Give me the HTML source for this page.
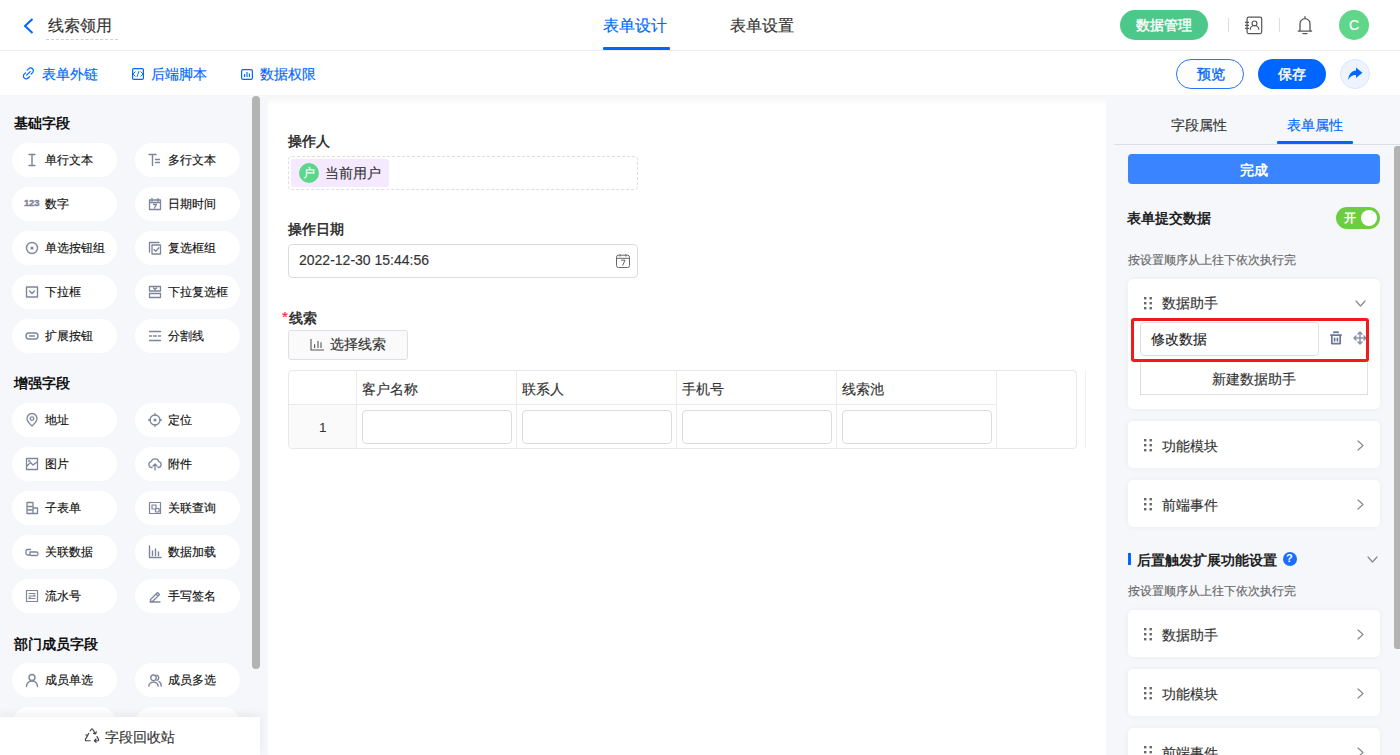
<!DOCTYPE html>
<html><head><meta charset="utf-8">
<style>
*{box-sizing:border-box;margin:0;padding:0}
html,body{width:1400px;height:755px;overflow:hidden;background:#fff;font-family:"Liberation Sans",sans-serif;color:#333}
.a{position:absolute}
.t{position:absolute;white-space:nowrap;line-height:1;-webkit-text-stroke-width:0.15px}
svg{position:absolute;overflow:visible}
/* header */
#hdr{left:0;top:0;width:1400px;height:51px;border-bottom:1px solid #ececec;background:#fff}
#bar2{left:0;top:51px;width:1400px;height:44px;background:#fff}
#shadow{left:0;top:95px;width:1400px;height:10px;background:linear-gradient(#f4f4f4,#fff)}
#left{left:0;top:95px;width:268px;height:660px;background:#f5f7fb}
#right{left:1106px;top:95px;width:294px;height:660px;background:#f5f7fb}
.pill{position:absolute;width:105px;height:34px;border-radius:17px;background:#fff}
.pill .t{font-size:12px;left:33px;top:11px;color:#222}
.pill svg{left:14px;top:11px}
.stitle{font-size:14px;font-weight:bold;color:#111}
.card{position:absolute;left:1128px;width:252px;background:#fff;border-radius:5px;box-shadow:0 0 6px rgba(0,0,0,0.05)}
.card .t{font-size:14px;color:#333}
.lbl{font-size:14px;font-weight:bold;color:#333}
.t[style*="bold"],.lbl,.stitle{-webkit-text-stroke-width:0}
.inp{position:absolute;border:1px solid #dcdcdc;border-radius:4px;background:#fff}
</style></head><body>
<div id="hdr" class="a"></div>
<!-- back arrow -->
<svg style="left:23px;top:18px" width="11" height="16" viewBox="0 0 11 16"><path d="M9.5 1L2 8L9.5 15" fill="none" stroke="#0066ff" stroke-width="2"/></svg>
<div class="t" style="left:48px;top:18px;font-size:16px;color:#333">线索领用</div>
<div class="a" style="left:46px;top:39px;width:72px;border-top:1px dashed #d0d0d0"></div>
<div class="t" style="left:603px;top:18px;font-size:16px;color:#0066ff">表单设计</div>
<div class="a" style="left:603px;top:47px;width:67px;height:3px;background:#0066ff;border-radius:1px"></div>
<div class="t" style="left:730px;top:18px;font-size:16px;color:#333">表单设置</div>
<div class="a" style="left:1120px;top:10px;width:88px;height:30px;border-radius:15px;background:#4cc98a"></div>
<div class="t" style="left:1136px;top:18px;font-size:14px;color:#fff;-webkit-text-stroke:0.35px #fff">数据管理</div>
<div class="a" style="left:1228px;top:18px;width:1px;height:14px;background:#ddd"></div>
<div class="a" style="left:1279px;top:18px;width:1px;height:14px;background:#ddd"></div>
<div class="a" style="left:1339px;top:10px;width:30px;height:30px;border-radius:50%;background:#5fd68a"></div>
<div class="t" style="left:1349px;top:18px;font-size:14px;color:#fff">C</div>
<div id="bar2" class="a"></div>
<div class="t" style="left:42px;top:67px;font-size:14px;color:#0066ff">表单外链</div>
<div class="t" style="left:151px;top:67px;font-size:14px;color:#0066ff">后端脚本</div>
<div class="t" style="left:260px;top:67px;font-size:14px;color:#0066ff">数据权限</div>
<div class="a" style="left:1176px;top:59px;width:68px;height:30px;border-radius:15px;border:1px solid #2a72f8"></div>
<div class="t" style="left:1197px;top:67px;font-size:14px;color:#0066ff;-webkit-text-stroke-width:0.35px">预览</div>
<div class="a" style="left:1258px;top:59px;width:68px;height:30px;border-radius:15px;background:#0066ff"></div>
<div class="t" style="left:1278px;top:67px;font-size:14px;color:#fff;-webkit-text-stroke-width:0.45px">保存</div>
<div class="a" style="left:1340px;top:59px;width:30px;height:30px;border-radius:50%;background:#eef4ff;border:1px solid #d9e6fb"></div>
<svg style="left:22px;top:67px" width="13" height="13" viewBox="0 0 13 13"><path d="M5.2 3.2L6.6 1.8A2.5 2.5 0 0 1 10.6 5.6L9.2 7M7.6 9.6L6.2 11A2.5 2.5 0 0 1 2.2 7.2L3.6 5.8M4.6 8.2L8.2 4.6" fill="none" stroke="#0066ff" stroke-width="1.2" stroke-linecap="round"/></svg>
<svg style="left:132px;top:68px" width="12" height="12" viewBox="0 0 12 12"><rect x="0.6" y="0.6" width="10.8" height="10.8" rx="1.2" fill="none" stroke="#0066ff" stroke-width="1.2"/><path d="M3.4 3.6L1 6L3.4 8.4M5 8.9L7 3.1M8.6 3.6L11 6L8.6 8.4" fill="none" stroke="#0066ff" stroke-width="0.95"/></svg>
<svg style="left:241px;top:69px" width="12" height="11" viewBox="0 0 12 11"><rect x="0.6" y="0.6" width="10.8" height="9.8" rx="1.6" fill="none" stroke="#0066ff" stroke-width="1.2"/><path d="M3.6 5V8M6 3V8M8.4 4.5V8" fill="none" stroke="#0066ff" stroke-width="1.1"/></svg>
<svg style="left:1244px;top:16px" width="20" height="20" viewBox="0 0 20 20"><rect x="3.1" y="1.2" width="14.6" height="16.4" rx="1.5" fill="none" stroke="#555" stroke-width="1.2"/><path d="M1 6.3H5M1 9.3H5M1 12.3H5M6.2 13.8A4.3 4.3 0 0 1 14.8 13.8M10.5 5A2.4 2.4 0 1 1 10.5 9.8A2.4 2.4 0 1 1 10.5 5Z" fill="none" stroke="#555" stroke-width="1.2"/></svg>
<svg style="left:1297px;top:15px" width="16" height="20" viewBox="0 0 16 20"><path d="M8 1.6V2.8M3 15V8.7A5 5 0 0 1 13 8.7V15Q13 15.8 14.6 16.2H1.4Q3 15.8 3 15ZM6 18.6H10" fill="none" stroke="#555" stroke-width="1.3" stroke-linecap="round" stroke-linejoin="round"/></svg>
<svg style="left:1346px;top:66px" width="18" height="16" viewBox="0 0 18 16"><path d="M10 1.6L16.4 6.8L10 12V9C6.2 9 3.8 10.8 2.2 14C2.4 8.6 5.6 4.6 10 4.4Z" fill="#0066ff"/></svg>
<div id="shadow" class="a"></div>

<div class="a" id="left"></div>
<div class="t stitle" style="left:14px;top:116px">基础字段</div>
<div class="pill" style="left:12px;top:143px"></div>
<svg style="left:25px;top:153px" width="14" height="14" viewBox="0 0 14 14" ><path d="M4 1.5H10M7 1.5V12.5M4 12.5H10" fill="none" stroke="#7d859b" stroke-width="1.4" stroke-linecap="round" stroke-linejoin="round"/></svg>
<div class="t" style="left:45px;top:154px;font-size:12px;color:#111;-webkit-text-stroke:0.15px #111">单行文本</div>
<div class="pill" style="left:135px;top:143px"></div>
<svg style="left:148px;top:153px" width="14" height="14" viewBox="0 0 14 14" ><path d="M1 1.5H8M4.5 1.5V12.5M7.5 6.5H11.5M7.5 9.5H11.5" fill="none" stroke="#7d859b" stroke-width="1.4" stroke-linecap="round" stroke-linejoin="round"/></svg>
<div class="t" style="left:168px;top:154px;font-size:12px;color:#111;-webkit-text-stroke:0.15px #111">多行文本</div>
<div class="pill" style="left:12px;top:187px"></div>
<div class="t" style="left:24px;top:198px;font-size:9.5px;font-weight:bold;color:#7d859b;letter-spacing:-0.2px;-webkit-text-stroke-width:0.4px">123</div>
<div class="t" style="left:45px;top:198px;font-size:12px;color:#111;-webkit-text-stroke:0.15px #111">数字</div>
<div class="pill" style="left:135px;top:187px"></div>
<svg style="left:148px;top:197px" width="14" height="14" viewBox="0 0 14 14" ><path d="M1.5 3H12.5V12.5H1.5ZM1.5 5.5H12.5M4 1.5V4M10 1.5V4M5.5 7.5H8.5L6.5 11" fill="none" stroke="#7d859b" stroke-width="1.3" stroke-linecap="round" stroke-linejoin="round"/></svg>
<div class="t" style="left:168px;top:198px;font-size:12px;color:#111;-webkit-text-stroke:0.15px #111">日期时间</div>
<div class="pill" style="left:12px;top:231px"></div>
<svg style="left:25px;top:241px" width="14" height="14" viewBox="0 0 14 14" ><circle cx="7" cy="7" r="5.5" fill="none" stroke="#7d859b" stroke-width="1.4"/><circle cx="7" cy="7" r="1.6" fill="#7d859b"/></svg>
<div class="t" style="left:45px;top:242px;font-size:12px;color:#111;-webkit-text-stroke:0.15px #111">单选按钮组</div>
<div class="pill" style="left:135px;top:231px"></div>
<svg style="left:148px;top:241px" width="14" height="14" viewBox="0 0 14 14" ><path d="M1.5 11V1.5H11M4 4H12.5V13H4ZM6 8.5L7.8 10.2L10.8 6.8" fill="none" stroke="#7d859b" stroke-width="1.3" stroke-linecap="round" stroke-linejoin="round"/></svg>
<div class="t" style="left:168px;top:242px;font-size:12px;color:#111;-webkit-text-stroke:0.15px #111">复选框组</div>
<div class="pill" style="left:12px;top:275px"></div>
<svg style="left:25px;top:285px" width="14" height="14" viewBox="0 0 14 14" ><path d="M1.5 2H12.5V12H1.5ZM4.5 6L7 8.5L9.5 6" fill="none" stroke="#7d859b" stroke-width="1.4" stroke-linecap="round" stroke-linejoin="round"/></svg>
<div class="t" style="left:45px;top:286px;font-size:12px;color:#111;-webkit-text-stroke:0.15px #111">下拉框</div>
<div class="pill" style="left:135px;top:275px"></div>
<svg style="left:148px;top:285px" width="14" height="14" viewBox="0 0 14 14" ><path d="M1.5 1.5H12.5V6H1.5ZM1.5 8.5H12.5V12.5H1.5ZM5.5 3L7 4.5L8.5 3" fill="none" stroke="#7d859b" stroke-width="1.3" stroke-linecap="round" stroke-linejoin="round"/></svg>
<div class="t" style="left:168px;top:286px;font-size:12px;color:#111;-webkit-text-stroke:0.15px #111">下拉复选框</div>
<div class="pill" style="left:12px;top:319px"></div>
<svg style="left:25px;top:329px" width="14" height="14" viewBox="0 0 14 14" ><path d="M4 4H10A3 3 0 0 1 10 10H4A3 3 0 0 1 4 4ZM4.5 7H9.5" fill="none" stroke="#7d859b" stroke-width="1.4" stroke-linecap="round" stroke-linejoin="round"/></svg>
<div class="t" style="left:45px;top:330px;font-size:12px;color:#111;-webkit-text-stroke:0.15px #111">扩展按钮</div>
<div class="pill" style="left:135px;top:319px"></div>
<svg style="left:148px;top:329px" width="14" height="14" viewBox="0 0 14 14" ><path d="M1.5 2.5H12.5M1.5 7H3.5M5.5 7H8.5M10.5 7H12.5M1.5 11.5H12.5" fill="none" stroke="#7d859b" stroke-width="1.3" stroke-linecap="round" stroke-linejoin="round"/></svg>
<div class="t" style="left:168px;top:330px;font-size:12px;color:#111;-webkit-text-stroke:0.15px #111">分割线</div>
<div class="t stitle" style="left:14px;top:376px">增强字段</div>
<div class="pill" style="left:12px;top:403px"></div>
<svg style="left:25px;top:413px" width="14" height="14" viewBox="0 0 14 14" ><path d="M7 13C7 13 2 8.5 2 5.5A5 5 0 0 1 12 5.5C12 8.5 7 13 7 13ZM7 3.8A1.8 1.8 0 1 1 7 7.4A1.8 1.8 0 1 1 7 3.8Z" fill="none" stroke="#7d859b" stroke-width="1.3" stroke-linecap="round" stroke-linejoin="round"/></svg>
<div class="t" style="left:45px;top:414px;font-size:12px;color:#111;-webkit-text-stroke:0.15px #111">地址</div>
<div class="pill" style="left:135px;top:403px"></div>
<svg style="left:148px;top:413px" width="14" height="14" viewBox="0 0 14 14" ><circle cx="7" cy="7" r="5" fill="none" stroke="#7d859b" stroke-width="1.3"/><circle cx="7" cy="7" r="1.5" fill="#7d859b"/><path d="M7 0.5V2.5M7 11.5V13.5M0.5 7H2.5M11.5 7H13.5" fill="none" stroke="#7d859b" stroke-width="1.3" stroke-linecap="round" stroke-linejoin="round"/></svg>
<div class="t" style="left:168px;top:414px;font-size:12px;color:#111;-webkit-text-stroke:0.15px #111">定位</div>
<div class="pill" style="left:12px;top:447px"></div>
<svg style="left:25px;top:457px" width="14" height="14" viewBox="0 0 14 14" ><path d="M1.5 1.5H12.5V12.5H1.5ZM2 9L5.5 5.5L8 8L12 5M3.5 4H5" fill="none" stroke="#7d859b" stroke-width="1.3" stroke-linecap="round" stroke-linejoin="round"/></svg>
<div class="t" style="left:45px;top:458px;font-size:12px;color:#111;-webkit-text-stroke:0.15px #111">图片</div>
<div class="pill" style="left:135px;top:447px"></div>
<svg style="left:148px;top:457px" width="14" height="14" viewBox="0 0 14 14" ><path d="M4 10.5H3.5A3 3 0 0 1 3.2 4.6A4 4 0 0 1 10.8 4.6A3 3 0 0 1 10.5 10.5H10M7 7V13M5 9L7 7L9 9" fill="none" stroke="#7d859b" stroke-width="1.3" stroke-linecap="round" stroke-linejoin="round"/></svg>
<div class="t" style="left:168px;top:458px;font-size:12px;color:#111;-webkit-text-stroke:0.15px #111">附件</div>
<div class="pill" style="left:12px;top:491px"></div>
<svg style="left:25px;top:501px" width="14" height="14" viewBox="0 0 14 14" ><path d="M2 1.5H8V12.5H2ZM2 5.5H8M8 7H12.5V12.5H8M2 9H8" fill="none" stroke="#7d859b" stroke-width="1.3" stroke-linecap="round" stroke-linejoin="round"/></svg>
<div class="t" style="left:45px;top:502px;font-size:12px;color:#111;-webkit-text-stroke:0.15px #111">子表单</div>
<div class="pill" style="left:135px;top:491px"></div>
<svg style="left:148px;top:501px" width="14" height="14" viewBox="0 0 14 14" ><path d="M1.5 1.5H12.5V12.5H1.5ZM4 4H8V8H4ZM7.5 7.5H11V11H7.5Z" fill="none" stroke="#7d859b" stroke-width="1.2" stroke-linecap="round" stroke-linejoin="round"/></svg>
<div class="t" style="left:168px;top:502px;font-size:12px;color:#111;-webkit-text-stroke:0.15px #111">关联查询</div>
<div class="pill" style="left:12px;top:535px"></div>
<svg style="left:25px;top:545px" width="14" height="14" viewBox="0 0 14 14" ><path d="M5.5 4.5H2.5A1.5 1.5 0 0 0 1 6V8.5A1.5 1.5 0 0 0 2.5 10H5.5M5 7H11.5A1.5 1.5 0 0 1 13 8.5V9A1.5 1.5 0 0 1 11.5 10.5H6.5A1.5 1.5 0 0 1 5 9Z" fill="none" stroke="#7d859b" stroke-width="1.3" stroke-linecap="round" stroke-linejoin="round"/></svg>
<div class="t" style="left:45px;top:546px;font-size:12px;color:#111;-webkit-text-stroke:0.15px #111">关联数据</div>
<div class="pill" style="left:135px;top:535px"></div>
<svg style="left:148px;top:545px" width="14" height="14" viewBox="0 0 14 14" ><path d="M1.5 1V12.5H13M4.5 6V10.5M7.5 4V10.5M10.5 7V10.5" fill="none" stroke="#7d859b" stroke-width="1.4" stroke-linecap="round" stroke-linejoin="round"/></svg>
<div class="t" style="left:168px;top:546px;font-size:12px;color:#111;-webkit-text-stroke:0.15px #111">数据加载</div>
<div class="pill" style="left:12px;top:579px"></div>
<svg style="left:25px;top:589px" width="14" height="14" viewBox="0 0 14 14" ><path d="M1.5 1.5H12.5V12.5H1.5ZM4 4.5H10M4 7H10M4 9.5H10M9 6L10 7M5 8.5L4 9.5" fill="none" stroke="#7d859b" stroke-width="1.2" stroke-linecap="round" stroke-linejoin="round"/></svg>
<div class="t" style="left:45px;top:590px;font-size:12px;color:#111;-webkit-text-stroke:0.15px #111">流水号</div>
<div class="pill" style="left:135px;top:579px"></div>
<svg style="left:148px;top:589px" width="14" height="14" viewBox="0 0 14 14" ><path d="M2 13H12M2.5 10.5L9.5 3.5L11.5 5.5L4.5 12.5H2.5ZM8 5L10 7" fill="none" stroke="#7d859b" stroke-width="1.3" stroke-linecap="round" stroke-linejoin="round"/></svg>
<div class="t" style="left:168px;top:590px;font-size:12px;color:#111;-webkit-text-stroke:0.15px #111">手写签名</div>
<div class="t stitle" style="left:14px;top:637px">部门成员字段</div>
<div class="pill" style="left:12px;top:663px"></div>
<svg style="left:25px;top:673px" width="14" height="14" viewBox="0 0 14 14" ><path d="M7 1.5A3 3 0 1 1 7 7.5A3 3 0 1 1 7 1.5ZM1.5 13.5A5.5 5.5 0 0 1 12.5 13.5" fill="none" stroke="#7d859b" stroke-width="1.4" stroke-linecap="round" stroke-linejoin="round"/></svg>
<div class="t" style="left:45px;top:674px;font-size:12px;color:#111;-webkit-text-stroke:0.15px #111">成员单选</div>
<div class="pill" style="left:135px;top:663px"></div>
<svg style="left:148px;top:673px" width="14" height="14" viewBox="0 0 14 14" ><path d="M5.5 2A2.8 2.8 0 1 1 5.5 7.6A2.8 2.8 0 1 1 5.5 2ZM0.8 13A4.8 4.8 0 0 1 10.2 13M9 2.2A2.8 2.8 0 0 1 9 7.4M11 8.5A4.8 4.8 0 0 1 13.2 13" fill="none" stroke="#7d859b" stroke-width="1.4" stroke-linecap="round" stroke-linejoin="round"/></svg>
<div class="t" style="left:168px;top:674px;font-size:12px;color:#111;-webkit-text-stroke:0.15px #111">成员多选</div>
<div class="pill" style="left:12px;top:707px"></div>
<div class="pill" style="left:135px;top:707px"></div>
<div class="a" style="left:252px;top:96px;width:8px;height:573px;border-radius:4px;background:#b3b3b3"></div>
<div class="a" style="left:0;top:717px;width:260px;height:38px;background:#fff;box-shadow:0 -2px 10px rgba(0,0,0,0.07)"></div>
<svg style="left:84px;top:728px" width="16" height="15" viewBox="0 0 16 15" ><path d="M6.2 3L7.3 1.3Q8 0.5 8.7 1.3L11.3 5.6M9.5 5.4L11.6 6L12.3 3.9M13 8.6L14.6 11.4Q15 12.7 13.7 12.7H10.4M12.1 11L10.3 12.7L12.1 14.3M6.2 12.7H2.3Q1 12.7 1.4 11.4L3.6 7.6M1.9 6.9L3.8 7.3L4.7 5.4" fill="none" stroke="#444" stroke-width="1.15" stroke-linecap="round" stroke-linejoin="round"/></svg>
<div class="t" style="left:105px;top:730px;font-size:14px;color:#333">字段回收站</div>
<div class="t lbl" style="left:288px;top:134px">操作人</div>
<div class="a" style="left:288px;top:156px;width:350px;height:34px;border:1px dashed #dedede;border-radius:4px"></div>
<div class="a" style="left:291px;top:159px;width:98px;height:28px;background:#f5e9ff;border-radius:2px"></div>
<div class="a" style="left:299px;top:163px;width:20px;height:20px;border-radius:50%;background:#5cd68a"></div>
<div class="t" style="left:303px;top:167px;font-size:12px;color:#fff">户</div>
<div class="t" style="left:325px;top:166px;font-size:14px;color:#333">当前用户</div>
<div class="t lbl" style="left:288px;top:222px">操作日期</div>
<div class="inp" style="left:288px;top:244px;width:350px;height:34px"></div>
<div class="t" style="left:299px;top:253px;font-size:14px;color:#333">2022-12-30 15:44:56</div>
<svg style="left:616px;top:254px" width="14" height="14" viewBox="0 0 14 14" ><rect x="0.5" y="1.2" width="13" height="12.3" rx="2" fill="none" stroke="#666" stroke-width="1"/><path d="M0.8 4.3H13.2M4 0.2V2.6M9.8 0.2V2.6M5 6.2H9L6.6 11.6" fill="none" stroke="#666" stroke-width="1"/></svg>
<div class="t" style="left:282px;top:309px;font-size:15px;color:#f5222d">*</div>
<div class="t lbl" style="left:289px;top:311px">线索</div>
<div class="a" style="left:288px;top:330px;width:120px;height:30px;border:1px solid #dcdfe6;border-radius:3px;background:#fafafa"></div>
<svg style="left:310px;top:338px" width="14" height="13" viewBox="0 0 14 13" ><path d="M1 1V12H14M4.6 6.3V10M8 3V10M11 4.2V10" fill="none" stroke="#555" stroke-width="1.1"/></svg>
<div class="t" style="left:330px;top:337px;font-size:14px;color:#333">选择线索</div>
<div class="a" style="left:288px;top:370px;width:789px;height:79px;border:1px solid #e8e8e8;border-radius:4px"></div>
<div class="a" style="left:1085px;top:370px;width:1px;height:79px;background:#f2f2f2"></div>
<div class="a" style="left:289px;top:405px;width:67px;height:43px;background:#fafafa;border-radius:0 0 0 3px"></div>
<div class="a" style="left:289px;top:404px;width:67px;height:1px;background:#ebebeb"></div>
<div class="a" style="left:356px;top:370px;width:1px;height:79px;background:#ebebeb"></div>
<div class="a" style="left:356px;top:404px;width:640px;height:1px;background:#ebebeb"></div>
<div class="a" style="left:516px;top:370px;width:1px;height:79px;background:#ebebeb"></div>
<div class="a" style="left:676px;top:370px;width:1px;height:79px;background:#ebebeb"></div>
<div class="a" style="left:836px;top:370px;width:1px;height:79px;background:#ebebeb"></div>
<div class="a" style="left:996px;top:370px;width:1px;height:79px;background:#ebebeb"></div>
<div class="t" style="left:362px;top:382px;font-size:14px;color:#333">客户名称</div>
<div class="inp" style="left:362px;top:410px;width:150px;height:34px"></div>
<div class="t" style="left:522px;top:382px;font-size:14px;color:#333">联系人</div>
<div class="inp" style="left:522px;top:410px;width:150px;height:34px"></div>
<div class="t" style="left:682px;top:382px;font-size:14px;color:#333">手机号</div>
<div class="inp" style="left:682px;top:410px;width:150px;height:34px"></div>
<div class="t" style="left:842px;top:382px;font-size:14px;color:#333">线索池</div>
<div class="inp" style="left:842px;top:410px;width:150px;height:34px"></div>
<div class="t" style="left:319px;top:421px;font-size:13.5px;color:#333;-webkit-text-stroke-width:0">1</div>
<div class="a" id="right"></div>
<div class="t" style="left:1171px;top:118px;font-size:14px;color:#333">字段属性</div>
<div class="t" style="left:1287px;top:118px;font-size:14px;color:#0066ff">表单属性</div>
<div class="a" style="left:1114px;top:144px;width:286px;height:1px;background:#dcdfe6"></div>
<div class="a" style="left:1277px;top:141px;width:76px;height:3px;background:#0066ff;border-radius:1px"></div>
<div class="a" style="left:1128px;top:154px;width:252px;height:30px;background:#3a84ff;border-radius:4px"></div>
<div class="t" style="left:1240px;top:163px;font-size:14px;color:#fff;font-weight:bold">完成</div>
<div class="t lbl" style="left:1127px;top:211px;color:#222">表单提交数据</div>
<div class="a" style="left:1336px;top:207px;width:44px;height:22px;border-radius:11px;background:#6dcd40"></div>
<div class="a" style="left:1361px;top:210px;width:16px;height:16px;border-radius:50%;background:#fff"></div>
<div class="t" style="left:1344px;top:212px;font-size:12px;color:#fff;font-weight:bold">开</div>
<div class="t" style="left:1128px;top:254px;font-size:12px;color:#666">按设置顺序从上往下依次执行完</div>
<div class="card" style="top:279px;height:130px"></div>
<svg style="left:1144px;top:297px" width="8" height="12" viewBox="0 0 8 12" ><g fill="#666"><rect x="0" y="0" width="2.4" height="2.4"/><rect x="0" y="5" width="2.4" height="2.4"/><rect x="0" y="10" width="2.4" height="2.4"/><rect x="5.5" y="0" width="2.4" height="2.4"/><rect x="5.5" y="5" width="2.4" height="2.4"/><rect x="5.5" y="10" width="2.4" height="2.4"/></g></svg>
<div class="t" style="left:1162px;top:296px;font-size:14px;color:#333">数据助手</div>
<svg style="left:1355px;top:300px" width="11" height="7" viewBox="0 0 11 7" ><path d="M1 1L5.5 6L10 1" fill="none" stroke="#888" stroke-width="1.2" stroke-linecap="round" stroke-linejoin="round"/></svg>
<div class="inp" style="left:1140px;top:322px;width:179px;height:34px;border-color:#dcdfe6"></div>
<div class="t" style="left:1151px;top:332px;font-size:14px;color:#222">修改数据</div>
<svg style="left:1329px;top:331px" width="14" height="14" viewBox="0 0 14 14" ><path d="M5 2.2V1.2H9V2.2M1.2 4.2H12.8M2.8 4.8V12.6H11.2V4.8M5.6 6.8V10.6M8.4 6.8V10.6" fill="none" stroke="#6a7794" stroke-width="1.7" stroke-linejoin="round"/></svg>
<div class="a" style="left:1350px;top:326px;width:16px;height:26px;overflow:hidden"><svg style="left:3px;top:5px" width="14" height="14" viewBox="0 0 14 14" ><path d="M7 1V13M1 7H13M5 3L7 1L9 3M5 11L7 13L9 11M3 5L1 7L3 9M11 5L13 7L11 9" fill="none" stroke="#8a93a6" stroke-width="1.5" stroke-linecap="round" stroke-linejoin="round"/></svg></div>
<div class="a" style="left:1140px;top:361px;width:228px;height:34px;border:1px solid #dcdfe6;border-top:none;background:#fff"></div>
<div class="t" style="left:1212px;top:372px;font-size:14px;color:#333">新建数据助手</div>
<div class="a" style="left:1131px;top:318px;width:238px;height:44px;border:3px solid #f21a1a;border-radius:3px"></div>
<div class="card" style="top:421px;height:47px"></div>
<svg style="left:1144px;top:439px" width="8" height="12" viewBox="0 0 8 12" ><g fill="#666"><rect x="0" y="0" width="2.4" height="2.4"/><rect x="0" y="5" width="2.4" height="2.4"/><rect x="0" y="10" width="2.4" height="2.4"/><rect x="5.5" y="0" width="2.4" height="2.4"/><rect x="5.5" y="5" width="2.4" height="2.4"/><rect x="5.5" y="10" width="2.4" height="2.4"/></g></svg>
<div class="t" style="left:1162px;top:439px;font-size:14px;color:#333">功能模块</div>
<svg style="left:1357px;top:440px" width="7" height="11" viewBox="0 0 7 11" ><path d="M1 1L6 5.5L1 10" fill="none" stroke="#888" stroke-width="1.2" stroke-linecap="round" stroke-linejoin="round"/></svg>
<div class="card" style="top:480px;height:47px"></div>
<svg style="left:1144px;top:498px" width="8" height="12" viewBox="0 0 8 12" ><g fill="#666"><rect x="0" y="0" width="2.4" height="2.4"/><rect x="0" y="5" width="2.4" height="2.4"/><rect x="0" y="10" width="2.4" height="2.4"/><rect x="5.5" y="0" width="2.4" height="2.4"/><rect x="5.5" y="5" width="2.4" height="2.4"/><rect x="5.5" y="10" width="2.4" height="2.4"/></g></svg>
<div class="t" style="left:1162px;top:498px;font-size:14px;color:#333">前端事件</div>
<svg style="left:1357px;top:499px" width="7" height="11" viewBox="0 0 7 11" ><path d="M1 1L6 5.5L1 10" fill="none" stroke="#888" stroke-width="1.2" stroke-linecap="round" stroke-linejoin="round"/></svg>
<div class="a" style="left:1128px;top:553px;width:3px;height:12px;background:#0066ff"></div>
<div class="t lbl" style="left:1137px;top:553px;color:#222">后置触发扩展功能设置</div>
<div class="a" style="left:1283px;top:552px;width:14px;height:14px;border-radius:50%;background:#1a6dff"></div>
<div class="t" style="left:1286px;top:553px;font-size:11px;color:#fff;font-weight:bold">?</div>
<svg style="left:1367px;top:556px" width="11" height="7" viewBox="0 0 11 7" ><path d="M1 1L5.5 6L10 1" fill="none" stroke="#888" stroke-width="1.2" stroke-linecap="round" stroke-linejoin="round"/></svg>
<div class="t" style="left:1128px;top:585px;font-size:12px;color:#666">按设置顺序从上往下依次执行完</div>
<div class="card" style="top:610px;height:47px"></div>
<svg style="left:1144px;top:628px" width="8" height="12" viewBox="0 0 8 12" ><g fill="#666"><rect x="0" y="0" width="2.4" height="2.4"/><rect x="0" y="5" width="2.4" height="2.4"/><rect x="0" y="10" width="2.4" height="2.4"/><rect x="5.5" y="0" width="2.4" height="2.4"/><rect x="5.5" y="5" width="2.4" height="2.4"/><rect x="5.5" y="10" width="2.4" height="2.4"/></g></svg>
<div class="t" style="left:1162px;top:628px;font-size:14px;color:#333">数据助手</div>
<svg style="left:1357px;top:629px" width="7" height="11" viewBox="0 0 7 11" ><path d="M1 1L6 5.5L1 10" fill="none" stroke="#888" stroke-width="1.2" stroke-linecap="round" stroke-linejoin="round"/></svg>
<div class="card" style="top:669px;height:47px"></div>
<svg style="left:1144px;top:687px" width="8" height="12" viewBox="0 0 8 12" ><g fill="#666"><rect x="0" y="0" width="2.4" height="2.4"/><rect x="0" y="5" width="2.4" height="2.4"/><rect x="0" y="10" width="2.4" height="2.4"/><rect x="5.5" y="0" width="2.4" height="2.4"/><rect x="5.5" y="5" width="2.4" height="2.4"/><rect x="5.5" y="10" width="2.4" height="2.4"/></g></svg>
<div class="t" style="left:1162px;top:687px;font-size:14px;color:#333">功能模块</div>
<svg style="left:1357px;top:688px" width="7" height="11" viewBox="0 0 7 11" ><path d="M1 1L6 5.5L1 10" fill="none" stroke="#888" stroke-width="1.2" stroke-linecap="round" stroke-linejoin="round"/></svg>
<div class="card" style="top:728px;height:47px"></div>
<svg style="left:1144px;top:746px" width="8" height="12" viewBox="0 0 8 12" ><g fill="#666"><rect x="0" y="0" width="2.4" height="2.4"/><rect x="0" y="5" width="2.4" height="2.4"/><rect x="0" y="10" width="2.4" height="2.4"/><rect x="5.5" y="0" width="2.4" height="2.4"/><rect x="5.5" y="5" width="2.4" height="2.4"/><rect x="5.5" y="10" width="2.4" height="2.4"/></g></svg>
<div class="t" style="left:1162px;top:746px;font-size:14px;color:#333">前端事件</div>
<svg style="left:1357px;top:747px" width="7" height="11" viewBox="0 0 7 11" ><path d="M1 1L6 5.5L1 10" fill="none" stroke="#888" stroke-width="1.2" stroke-linecap="round" stroke-linejoin="round"/></svg>
<div class="a" style="left:1394px;top:146px;width:6px;height:503px;border-radius:3px 0 0 3px;background:#b3b3b3"></div>
</body></html>
